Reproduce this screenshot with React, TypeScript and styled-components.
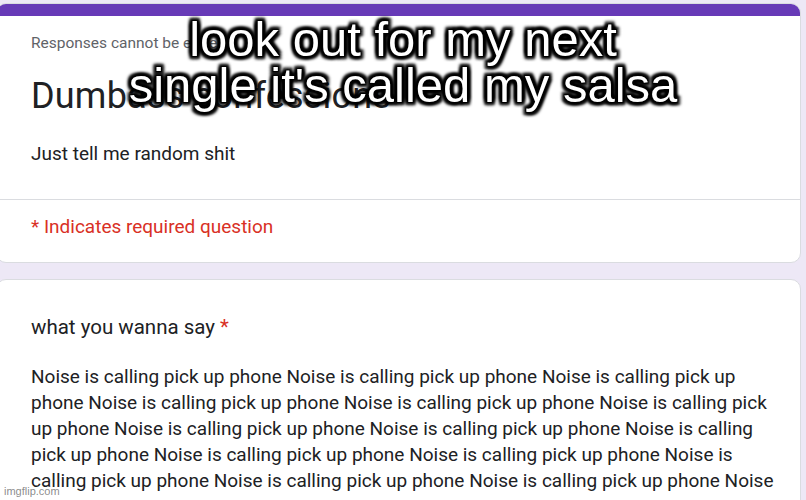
import React from "react";
import styled, { createGlobalStyle } from "styled-components";

const Global = createGlobalStyle`
  html, body {
    margin: 0;
    padding: 0;
    width: 806px;
    height: 500px;
    overflow: hidden;
    background: #ede8f6;
  }
  body {
    font-family: Roboto, "Liberation Sans", Arial, sans-serif;
    color: #202124;
  }
`;

const Page = styled.div`
  position: relative;
  width: 806px;
  height: 500px;
  overflow: hidden;
  background: #ede8f6;
  padding-top: 3px;
  box-sizing: border-box;
`;

const Column = styled.div`
  display: flex;
  flex-direction: column;
  gap: 16px;
  margin: 0 5px 0 -4px;
`;

const Card = styled.section`
  background: #ffffff;
  border: 1px solid #dadce0;
  border-radius: 10px;
  overflow: hidden;
  display: flex;
  flex-direction: column;
`;

const AccentBar = styled.div`
  height: 13px;
  background: #673ab7;
  margin: -1px -1px 0;
`;

const Section = styled.div<{ $pt: number; $pb: number }>`
  padding: ${(p) => p.$pt}px 24px ${(p) => p.$pb}px 34px;
  display: flex;
  flex-direction: column;
`;

const Divider = styled.div`
  height: 1px;
  background: #dadce0;
`;

const Notice = styled.div`
  font-size: 15.5px;
  line-height: 22px;
  color: #5f6368;
`;

const Title = styled.h1`
  margin: 20px 0 0;
  font-size: 36px;
  line-height: 44px;
  font-weight: 400;
  color: #202124;
  letter-spacing: 0.2px;
`;

const Description = styled.div`
  margin-top: 23px;
  font-size: 19px;
  line-height: 26px;
  color: #202124;
`;

const Required = styled.div`
  font-size: 19px;
  line-height: 26px;
  color: #d93025;
`;

const Question = styled.div`
  font-size: 20.5px;
  line-height: 28px;
  color: #202124;
`;

const Star = styled.span`
  color: #d93025;
`;

const Answer = styled.div`
  margin-top: 22.5px;
  font-size: 19px;
  line-height: 26px;
  color: #202124;
`;

const AnswerLine = styled.div`
  white-space: nowrap;
`;

const Caption = styled.div`
  position: absolute;
  top: 16px;
  left: 0;
  right: 0;
  text-align: center;
  font-family: "Liberation Sans", Arial, sans-serif;
  font-size: 49px;
  line-height: 46px;
  color: #ffffff;
  text-shadow:
    3px 3px 3px #000, -3px -3px 3px #000, 3px -3px 3px #000, -3px 3px 3px #000,
    0 3px 3px #000, 3px 0 3px #000, 0 -3px 3px #000, -3px 0 3px #000,
    1px 1px 1px #000, -1px -1px 1px #000, 1px -1px 1px #000, -1px 1px 1px #000;
  pointer-events: none;
`;

const Watermark = styled.div`
  position: absolute;
  left: 4px;
  bottom: 3px;
  font-family: "Liberation Sans", Arial, sans-serif;
  font-size: 11px;
  line-height: 12px;
  color: rgba(110, 110, 110, 0.8);
  text-shadow: 0 0 1px rgba(255, 255, 255, 0.9);
`;

const answerLines = [
  "Noise is calling pick up phone Noise is calling pick up phone Noise is calling pick up",
  "phone Noise is calling pick up phone Noise is calling pick up phone Noise is calling pick",
  "up phone Noise is calling pick up phone Noise is calling pick up phone Noise is calling",
  "pick up phone Noise is calling pick up phone Noise is calling pick up phone Noise is",
  "calling pick up phone Noise is calling pick up phone Noise is calling pick up phone Noise",
];

export default function App() {
  return (
    <>
      <Global />
      <Page>
        <Column>
          <Card>
            <AccentBar />
            <Section $pt={16} $pb={32}>
              <Notice>Responses cannot be edited</Notice>
              <Title>Dumbass confessions</Title>
              <Description>Just tell me random shit</Description>
            </Section>
            <Divider />
            <Section $pt={14} $pb={22}>
              <Required>* Indicates required question</Required>
            </Section>
          </Card>
          <Card>
            <Section $pt={33} $pb={24}>
              <Question>
                what you wanna say <Star>*</Star>
              </Question>
              <Answer>
                {answerLines.map((l, i) => (
                  <AnswerLine key={i}>{l}</AnswerLine>
                ))}
              </Answer>
            </Section>
          </Card>
        </Column>
        <Caption>
          look out for my next
          <br />
          single it's called my salsa
        </Caption>
        <Watermark>imgflip.com</Watermark>
      </Page>
    </>
  );
}
